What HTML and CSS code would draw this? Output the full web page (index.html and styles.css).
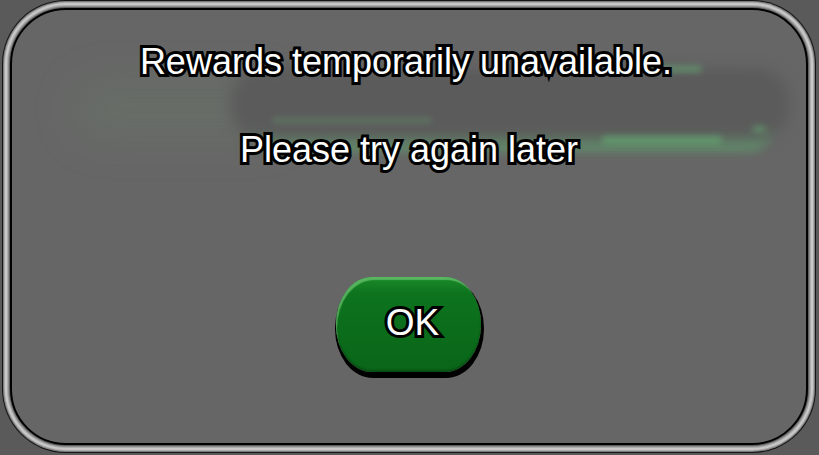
FILE: index.html
```html
<!DOCTYPE html>
<html lang="en">
<head>
<meta charset="utf-8">
<title>Rewards unavailable</title>
<link rel="stylesheet" href="styles.css">
</head>
<body>
  <div class="panel">
    <div class="ghost" aria-hidden="true">
      <div class="ghost-haze"></div>
      <div class="ghost-glow"></div>
      <div class="ghost-bar"></div>
      <div class="ghost-streak s1"></div>
      <div class="ghost-streak s2"></div>
      <div class="ghost-streak s3"></div>
      <div class="ghost-streak s4"></div>
    </div>
    <p class="msg msg-first">Rewards temporarily unavailable.</p>
    <p class="msg msg-second">Please try again later</p>
    <button class="ok-btn" type="button"><span class="ok-label">OK</span></button>
  </div>
</body>
</html>
```
FILE: styles.css
```css
html, body {
  margin: 0;
  padding: 0;
}
body {
  width: 819px;
  height: 455px;
  background: #5a5a5a;
  padding: 8px 11px 10px 10px;
  box-sizing: border-box;
  overflow: hidden;
  font-family: "Liberation Sans", Arial, sans-serif;
}
.panel {
  position: relative;
  width: 798px;
  height: 437px;
  box-sizing: border-box;
  border: 2px solid #000;
  border-radius: 56px;
  background: #666666;
  box-shadow:
    0 0 0 1px #5e5e5e,
    0 0 0 2px #8c8c8c,
    0 0 0 3px #acacac,
    0 0 0 5px #c8c8c8,
    0 0 0 6px #a8a8a8,
    0 0 0 7px #7c7c7c,
    0 0 0 8px #151515;
  display: flex;
  flex-direction: column;
  align-items: center;
  padding-top: 34px;
  overflow: hidden;
}
.ghost {
  position: absolute;
  inset: 0;
  pointer-events: none;
}
.ghost-haze {
  position: absolute;
  left: 60px;
  top: 70px;
  width: 220px;
  height: 60px;
  border-radius: 40px;
  background: rgba(110, 150, 115, 0.16);
  filter: blur(20px);
}
.ghost-glow {
  position: absolute;
  left: 240px;
  top: 96px;
  width: 520px;
  height: 46px;
  border-radius: 30px;
  background: rgba(95, 165, 110, 0.6);
  filter: blur(5px);
}
.ghost-bar {
  position: absolute;
  left: 218px;
  top: 58px;
  width: 560px;
  height: 72px;
  border-radius: 34px;
  background: #5b5b5b;
  filter: blur(7px);
}
.ghost-streak {
  position: absolute;
  background: rgba(100, 175, 115, 0.6);
  filter: blur(3px);
  border-radius: 4px;
}
.s1 { left: 640px; top: 56px; width: 50px; height: 6px; }
.s2 { left: 740px; top: 116px; width: 14px; height: 6px; }
.s3 { left: 590px; top: 126px; width: 120px; height: 8px; }
.s4 { left: 260px; top: 108px; width: 160px; height: 5px; background: rgba(100, 175, 115, 0.35); }
.msg {
  position: relative;
  margin: 0;
  color: #fff;
  font-size: 36px;
  line-height: 1;
  white-space: nowrap;
  -webkit-text-stroke: 6px #000;
  paint-order: stroke fill;
}
.msg-first {
  margin-left: -6px;
}
.msg-second {
  margin-top: 52px;
}
.ok-btn {
  position: relative;
  margin-top: 109px;
  margin-left: -2px;
  width: 145px;
  height: 95px;
  padding: 0;
  border: none;
  border-radius: 36px / 47px;
  background: linear-gradient(#1a8a2a 0%, #0d731d 18%, #0b6c1b 60%, #0a6619 100%);
  box-shadow:
    inset 2px 4px 1px -1px rgba(140, 220, 140, 0.55),
    inset 0 -2px 2px rgba(0, 0, 0, 0.25),
    1px 4px 0 2px #000;
  display: flex;
  align-items: center;
  justify-content: center;
  font-family: inherit;
}
.ok-label {
  color: #fff;
  font-size: 37px;
  line-height: 1;
  margin-left: 9px;
  margin-top: -4px;
  -webkit-text-stroke: 6px #000;
  paint-order: stroke fill;
}
```
